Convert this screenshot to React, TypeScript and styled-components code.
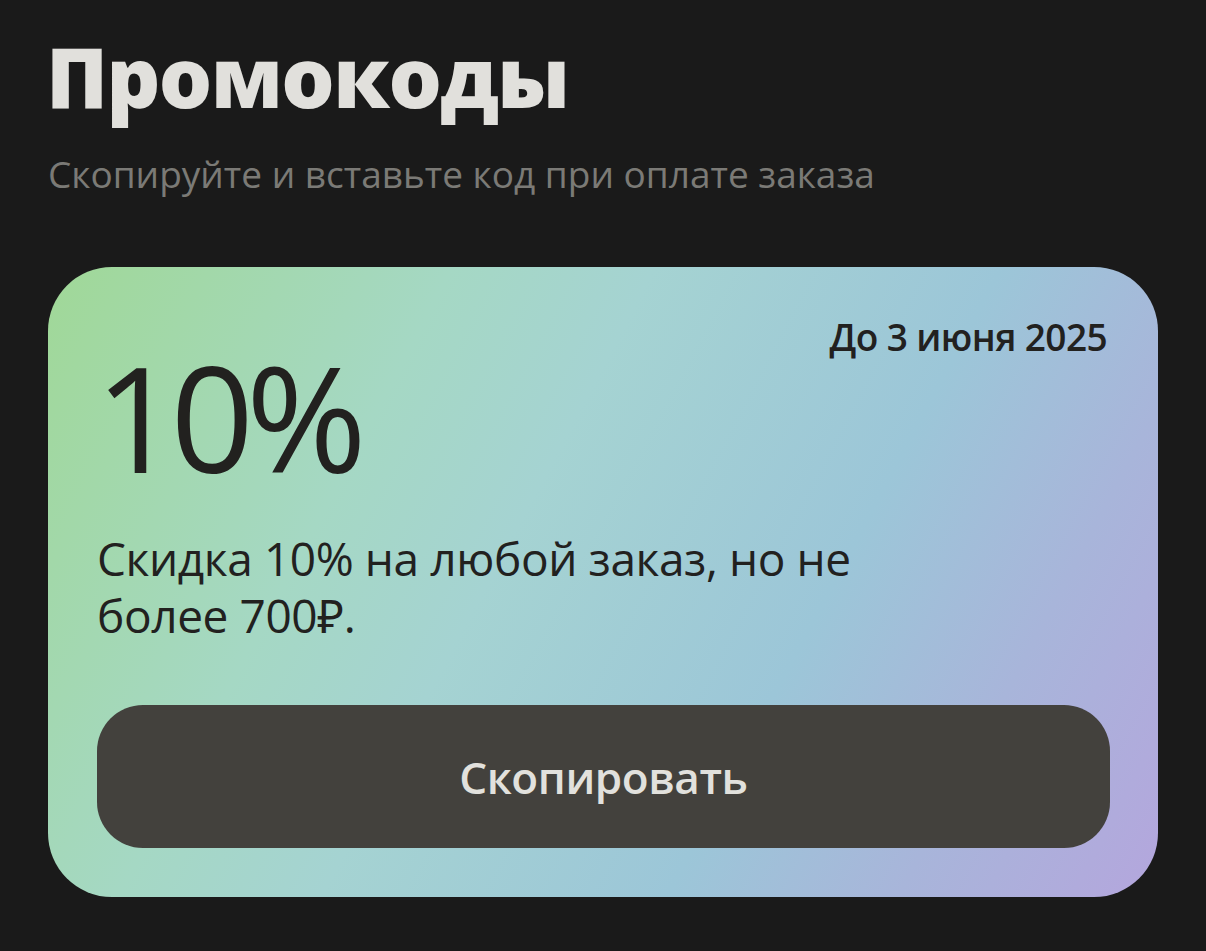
import React from "react";
import styled, { createGlobalStyle } from "styled-components";

const Global = createGlobalStyle`
  html, body {
    margin: 0;
    padding: 0;
    background: #1a1a1a;
  }
  body {
    font-family: "Open Sans", "Noto Sans", sans-serif;
    -webkit-font-smoothing: antialiased;
  }
`;

const Page = styled.div`
  min-height: 951px;
  box-sizing: border-box;
  padding: 28px 48px 40px 48px;
  display: flex;
  flex-direction: column;
`;

const Title = styled.h1`
  margin: 0 0 0 -2px;
  font-family: "Open Sans", sans-serif;
  font-weight: 800;
  font-size: 84px;
  line-height: 96px;
  color: #e1e0dc;
  letter-spacing: -1.6px;
`;

const Subtitle = styled.p`
  margin: 27px 0 0 0;
  font-size: 37px;
  line-height: 46px;
  color: #7b7a76;
  letter-spacing: 0;
`;

const Card = styled.section`
  margin-top: 70px;
  width: 1110px;
  height: 630px;
  box-sizing: border-box;
  border-radius: 64px;
  padding: 48px 48px 49px 49px;
  display: flex;
  flex-direction: column;
  background: linear-gradient(
    118deg,
    #a0d897 0%,
    #a5d8c4 28%,
    #a5d3d2 42%,
    #9cc6d8 66%,
    #a8b5da 82%,
    #b4a6dd 100%
  );
`;

const DateRow = styled.div`
  display: flex;
  justify-content: flex-end;
  padding-right: 3px;
  font-size: 37px;
  font-weight: 600;
  line-height: 44px;
  color: #22211f;
  letter-spacing: -0.6px;
`;

const Percent = styled.div`
  margin-top: -7px;
  margin-left: -2px;
  font-family: "Open Sans", sans-serif;
  font-weight: 400;
  font-size: 146px;
  line-height: 130px;
  color: #22211f;
  letter-spacing: -8px;
`;

const Description = styled.p`
  margin: 48px 0 0 0;
  max-width: 790px;
  font-size: 46px;
  line-height: 57px;
  color: #22211f;
  letter-spacing: -0.4px;
`;

const CopyButton = styled.button`
  margin-top: auto;
  width: 100%;
  height: 143px;
  border: none;
  border-radius: 46px;
  background: #43413d;
  color: #e2e1dd;
  font-family: "Open Sans", sans-serif;
  font-size: 44px;
  font-weight: 600;
  letter-spacing: -0.4px;
  cursor: pointer;
  display: flex;
  align-items: center;
  justify-content: center;
`;

export default function App() {
  return (
    <>
      <Global />
      <Page>
        <Title>Промокоды</Title>
        <Subtitle>Скопируйте и вставьте код при оплате заказа</Subtitle>
        <Card>
          <DateRow>До 3 июня 2025</DateRow>
          <Percent>10%</Percent>
          <Description>Скидка 10% на любой заказ, но не более 700₽.</Description>
          <CopyButton>Скопировать</CopyButton>
        </Card>
      </Page>
    </>
  );
}
